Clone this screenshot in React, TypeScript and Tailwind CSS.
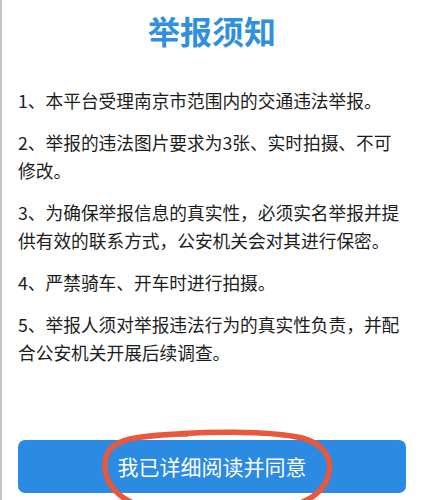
import React from "react";

const items: string[] = [
  "1、本平台受理南京市范围内的交通违法举报。",
  "2、举报的违法图片要求为3张、实时拍摄、不可修改。",
  "3、为确保举报信息的真实性，必须实名举报并提供有效的联系方式，公安机关会对其进行保密。",
  "4、严禁骑车、开车时进行拍摄。",
  "5、举报人须对举报违法行为的真实性负责，并配合公安机关开展后续调查。",
];

export default function App() {
  return (
    <div
      className="relative w-[424px] h-[500px] overflow-hidden bg-white border-l-2 border-[#c6c6c6]"
      style={{ fontFamily: '"Noto Sans CJK SC", "Noto Sans", sans-serif' }}
    >
      <div className="flex flex-col pl-[16px] pr-[18px]">
        <h1 className="mt-[10px] text-center text-[32px] leading-[40px] font-bold text-[#3190dc]">
          举报须知
        </h1>
        <div className="mt-[36px] flex flex-col gap-[14px] text-[17.7px] leading-[28px] text-[#1c1c1c]">
          {items.map((t, i) => (
            <p key={i}>{t}</p>
          ))}
        </div>
        <button className="mt-[74px] h-[53px] w-full rounded-[7px] bg-[#2b8ae2] text-white text-[21px] leading-[53px] flex items-center justify-center">
          我已详细阅读并同意
        </button>
      </div>
      <svg
        className="absolute left-0 top-0 pointer-events-none"
        width="424"
        height="500"
        viewBox="0 0 424 500"
      >
        <path
          d="M 140 437 C 200 430, 270 431, 300 438 C 322 444, 330 458, 327 472 C 324 490, 310 500, 290 506 L 140 506 C 118 500, 104 485, 103 468 C 102 452, 110 443, 128 439 C 148 435, 168 434, 185 434"
          fill="none"
          stroke="#e9573c"
          strokeWidth="5.5"
          strokeLinecap="round"
          strokeLinejoin="round"
        />
      </svg>
    </div>
  );
}
